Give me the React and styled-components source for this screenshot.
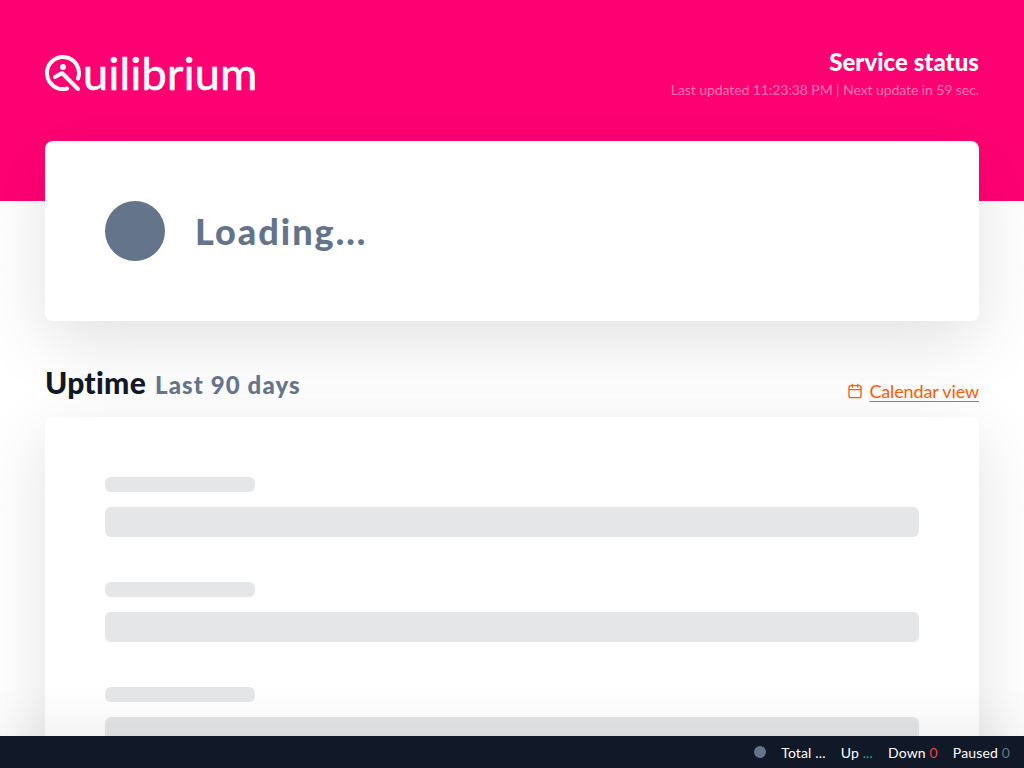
import styled, { createGlobalStyle } from "styled-components";

const GlobalStyle = createGlobalStyle`
  * { box-sizing: border-box; }
  html, body { margin: 0; padding: 0; background: #fff; }
  body { font-family: "Lato", "Liberation Sans", sans-serif; color: #111827; }
`;

const Page = styled.div`
  position: relative;
  height: 768px;
  overflow: hidden;
`;

const Hero = styled.header`
  background: #ff0073;
  height: 201px;
  padding: 47px 45px 0;
  display: flex;
  justify-content: space-between;
  align-items: flex-start;
`;

const Brand = styled.div`
  display: flex;
  align-items: center;
  color: #fff;
  margin-top: 8px;
`;

const BrandName = styled.span`
  font-size: 45px;
  line-height: 37px;
  font-weight: 400;
  letter-spacing: 0.3px;
  margin-left: 1px;
  -webkit-text-stroke: 0.6px #fff;
`;

const HeroInfo = styled.div`
  text-align: right;
`;

const HeroTitle = styled.div`
  color: #fff;
  font-size: 24px;
  line-height: 30px;
  font-weight: 900;
  letter-spacing: 0.05px;
`;

const HeroMeta = styled.div`
  color: #ff78b3;
  font-size: 14px;
  line-height: 20px;
  margin-top: 3px;
  font-weight: 400;
  letter-spacing: -0.08px;
`;

const Main = styled.main`
  padding: 0 45px;
  margin-top: -60px;
`;

const Card = styled.section`
  background: #fff;
  border-radius: 8px;
  box-shadow: 0 20px 70px rgba(0, 0, 0, 0.12);
  padding: 60px;
`;

const StatusRow = styled.div`
  display: flex;
  align-items: center;
  gap: 30px;
`;

const StatusDot = styled.div`
  width: 60px;
  height: 60px;
  border-radius: 50%;
  background: #64748b;
`;

const StatusText = styled.h1`
  margin: 0;
  color: #64748b;
  font-size: 36px;
  line-height: 40px;
  font-weight: 900;
  letter-spacing: 2px;
`;

const SectionHead = styled.div`
  display: flex;
  justify-content: space-between;
  align-items: flex-end;
  margin: 46px 0 14px;
  height: 36px;
`;

const SectionTitle = styled.h2`
  margin: 0;
  font-size: 30px;
  line-height: 36px;
  font-weight: 900;
  letter-spacing: 0.3px;
  color: #111827;
`;

const SectionSub = styled.span`
  font-size: 24px;
  color: #64748b;
  margin-left: 9px;
  letter-spacing: 1.1px;
`;

const CalendarLink = styled.a`
  display: flex;
  align-items: center;
  gap: 6px;
  color: #ff5a00;
  font-size: 18px;
  line-height: 26px;
  text-decoration: underline;
  text-underline-offset: 3px;
  text-decoration-thickness: 1px;
  letter-spacing: -0.13px;
  margin-bottom: -1px;
`;

const SkeletonGroup = styled.div`
  margin-bottom: 45px;
`;

const SkeletonLabel = styled.div`
  width: 150px;
  height: 15px;
  border-radius: 6px;
  background: #e5e6e8;
  margin-bottom: 15px;
`;

const SkeletonBar = styled.div`
  height: 30px;
  border-radius: 6px;
  background: #e5e6e8;
`;

const Footer = styled.footer`
  position: absolute;
  left: 0;
  right: 0;
  bottom: 0;
  height: 32px;
  background: #111827;
  box-shadow: 0 0 55px rgba(0, 0, 0, 0.12);
  display: flex;
  justify-content: flex-end;
  align-items: center;
  padding-right: 14px;
  font-size: 14px;
  color: #fff;
`;

const FooterDot = styled.span`
  width: 12px;
  height: 12px;
  border-radius: 50%;
  background: #64748b;
  margin-right: 15px;
`;

const Stat = styled.span`
  margin-left: ${(p) => (p.$first ? "0" : "15px")};
  letter-spacing: 0.15px;
`;

const StatValue = styled.span`
  color: ${(p) => p.$color};
`;

const groups = [0, 1, 2];

export default function App() {
  return (
    <Page>
      <GlobalStyle />
      <Hero>
        <Brand>
          <svg width="37" height="37" viewBox="0 0 37 37" fill="none" stroke="#fff" strokeWidth="4" strokeLinecap="round" strokeLinejoin="round">
            <path d="M33 23.5A16 16 0 1 0 22.1 33.5" />
            <path d="M10 22l7-4 16 16" />
            <circle cx="18" cy="12" r="3" fill="#fff" stroke="none" />
          </svg>
          <BrandName>uilibrium</BrandName>
        </Brand>
        <HeroInfo>
          <HeroTitle>Service status</HeroTitle>
          <HeroMeta>Last updated 11:23:38 PM | Next update in 59 sec.</HeroMeta>
        </HeroInfo>
      </Hero>
      <Main>
        <Card>
          <StatusRow>
            <StatusDot />
            <StatusText>Loading...</StatusText>
          </StatusRow>
        </Card>
        <SectionHead>
          <SectionTitle>
            Uptime<SectionSub>Last 90 days</SectionSub>
          </SectionTitle>
          <CalendarLink>
            <svg width="16" height="16" viewBox="0 0 24 24" fill="none" stroke="#ff5a00" strokeWidth="2" strokeLinecap="round" strokeLinejoin="round">
              <rect x="3" y="4" width="18" height="18" rx="3" />
              <path d="M8 2v4M16 2v4M3 10h18" />
            </svg>
            Calendar view
          </CalendarLink>
        </SectionHead>
        <Card>
          {groups.map((g) => (
            <SkeletonGroup key={g}>
              <SkeletonLabel />
              <SkeletonBar />
            </SkeletonGroup>
          ))}
        </Card>
      </Main>
      <Footer>
        <FooterDot />
        <Stat $first>Total <StatValue $color="#fff">...</StatValue></Stat>
        <Stat>Up <StatValue $color="#10b981">...</StatValue></Stat>
        <Stat>Down <StatValue $color="#ef4444">0</StatValue></Stat>
        <Stat>Paused <StatValue $color="#64748b">0</StatValue></Stat>
      </Footer>
    </Page>
  );
}
